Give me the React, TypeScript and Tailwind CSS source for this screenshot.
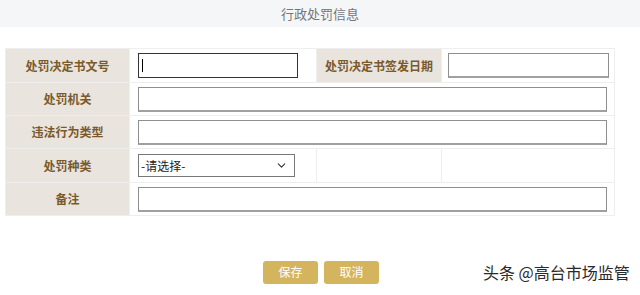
import { ChevronDown } from "lucide-react";

const font = { fontFamily: '"Noto Sans CJK SC", "Liberation Sans", sans-serif' };

function Label({ text }: { text: string }) {
  return (
    <td className="border border-[#eeeeee] bg-[#e9e4dd] text-center text-[12px] font-bold text-[#7a5a2c]">
      {text}
    </td>
  );
}

function Box({ w, focus }: { w: string; focus?: boolean }) {
  return (
    <div
      className={`h-[25px] bg-white ${w} ${
        focus ? "border border-[#333]" : "border border-[#8f8f8f] border-b-2 border-b-[#a0a0a0]"
      } flex items-center`}
    >
      {focus && <span className="ml-[3px] h-[13px] w-px bg-black" />}
    </div>
  );
}

export default function App() {
  return (
    <div className="h-[295px] w-[640px] overflow-hidden bg-white" style={font}>
      <div className="flex h-[27px] items-center justify-center bg-[#f5f6f8] text-[13px] text-[#777]">
        行政处罚信息
      </div>

      <div className="pl-[5px] pt-[21px]">
        <table className="w-[609px] table-fixed border-collapse">
          <colgroup>
            <col className="w-[124px]" />
            <col className="w-[187px]" />
            <col className="w-[125px]" />
            <col className="w-[173px]" />
          </colgroup>
          <tbody>
            <tr className="h-[34px]">
              <Label text="处罚决定书文号" />
              <td className="border border-[#eeeeee] pl-[8px]">
                <Box w="w-[160px]" focus />
              </td>
              <Label text="处罚决定书签发日期" />
              <td className="border border-[#eeeeee] pl-[6px]">
                <Box w="w-[161px]" />
              </td>
            </tr>
            {["处罚机关", "违法行为类型"].map((t) => (
              <tr key={t} className="h-[33px]">
                <Label text={t} />
                <td colSpan={3} className="border border-[#eeeeee] pl-[8px]">
                  <Box w="w-[469px]" />
                </td>
              </tr>
            ))}
            <tr className="h-[34px]">
              <Label text="处罚种类" />
              <td className="border border-[#eeeeee] pl-[8px]">
                <div className="flex h-[23px] w-[157px] items-center justify-between border border-[#777] bg-white pl-[2px] pr-[6px] text-[12px] text-[#222]">
                  <span>-请选择-</span>
                  <ChevronDown size={13} strokeWidth={2} className="text-[#333]" />
                </div>
              </td>
              <td className="border border-[#eeeeee]" />
              <td className="border border-[#eeeeee]" />
            </tr>
            <tr className="h-[33px]">
              <Label text="备注" />
              <td colSpan={3} className="border border-[#eeeeee] pl-[8px]">
                <Box w="w-[469px]" />
              </td>
            </tr>
          </tbody>
        </table>
      </div>

      <div className="mt-[44px] flex items-center">
        <div className="ml-[263px] flex gap-[6px]">
          <button className="h-[23px] w-[55px] rounded-[3px] bg-[#d5b45e] text-[12px] text-white">保存</button>
          <button className="h-[23px] w-[55px] rounded-[3px] bg-[#d5b45e] text-[12px] text-white">取消</button>
        </div>
        <div className="ml-[104px] text-[16px] text-[#2a2a2a]">头条 @高台市场监管</div>
      </div>
    </div>
  );
}
